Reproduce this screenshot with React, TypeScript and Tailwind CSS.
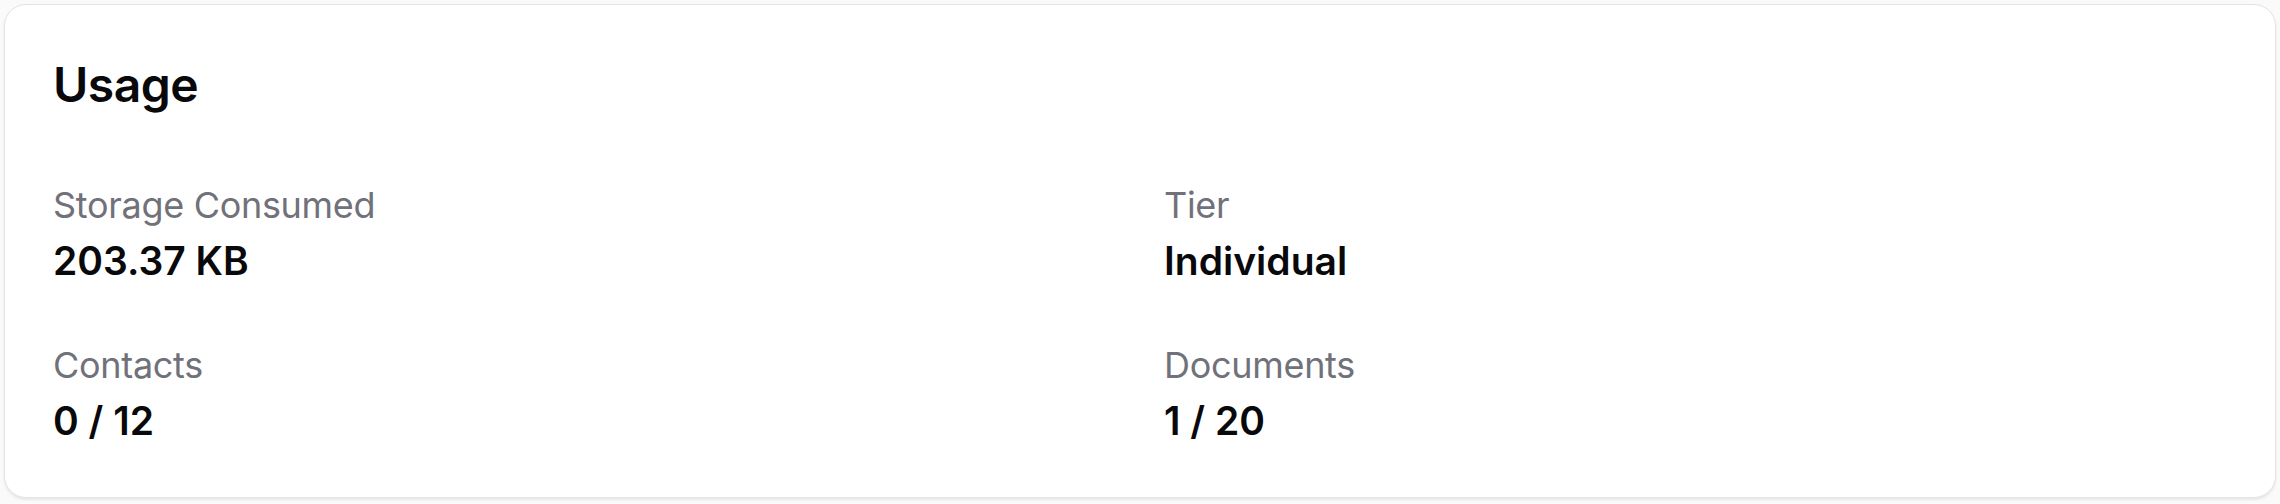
const stats = [
  { label: "Storage Consumed", value: "203.37 KB" },
  { label: "Tier", value: "Individual" },
  { label: "Contacts", value: "0 / 12" },
  { label: "Documents", value: "1 / 20" },
];

export default function App() {
  return (
    <div className="min-h-screen bg-[#fafafa] p-1 font-['Inter',sans-serif]">
      <div className="rounded-[22px] border border-[#e4e4e7] bg-white p-12 shadow-[0_2px_3px_rgba(0,0,0,0.08)]">
        <h2 className="text-[48px] leading-[64px] font-semibold text-[#09090b] tracking-[-0.5px]">Usage</h2>

        {/* Stats grid */}
        <div className="mt-[60px] grid grid-cols-2 gap-x-12 gap-y-12">
          {stats.map((s) => (
            <div key={s.label}>
              <div className="text-[36px] leading-[56px] text-[#71717a] tracking-[-0.3px]">{s.label}</div>
              <div className="text-[39px] leading-[56px] font-semibold text-[#09090b]">{s.value}</div>
            </div>
          ))}
        </div>
      </div>
    </div>
  );
}
